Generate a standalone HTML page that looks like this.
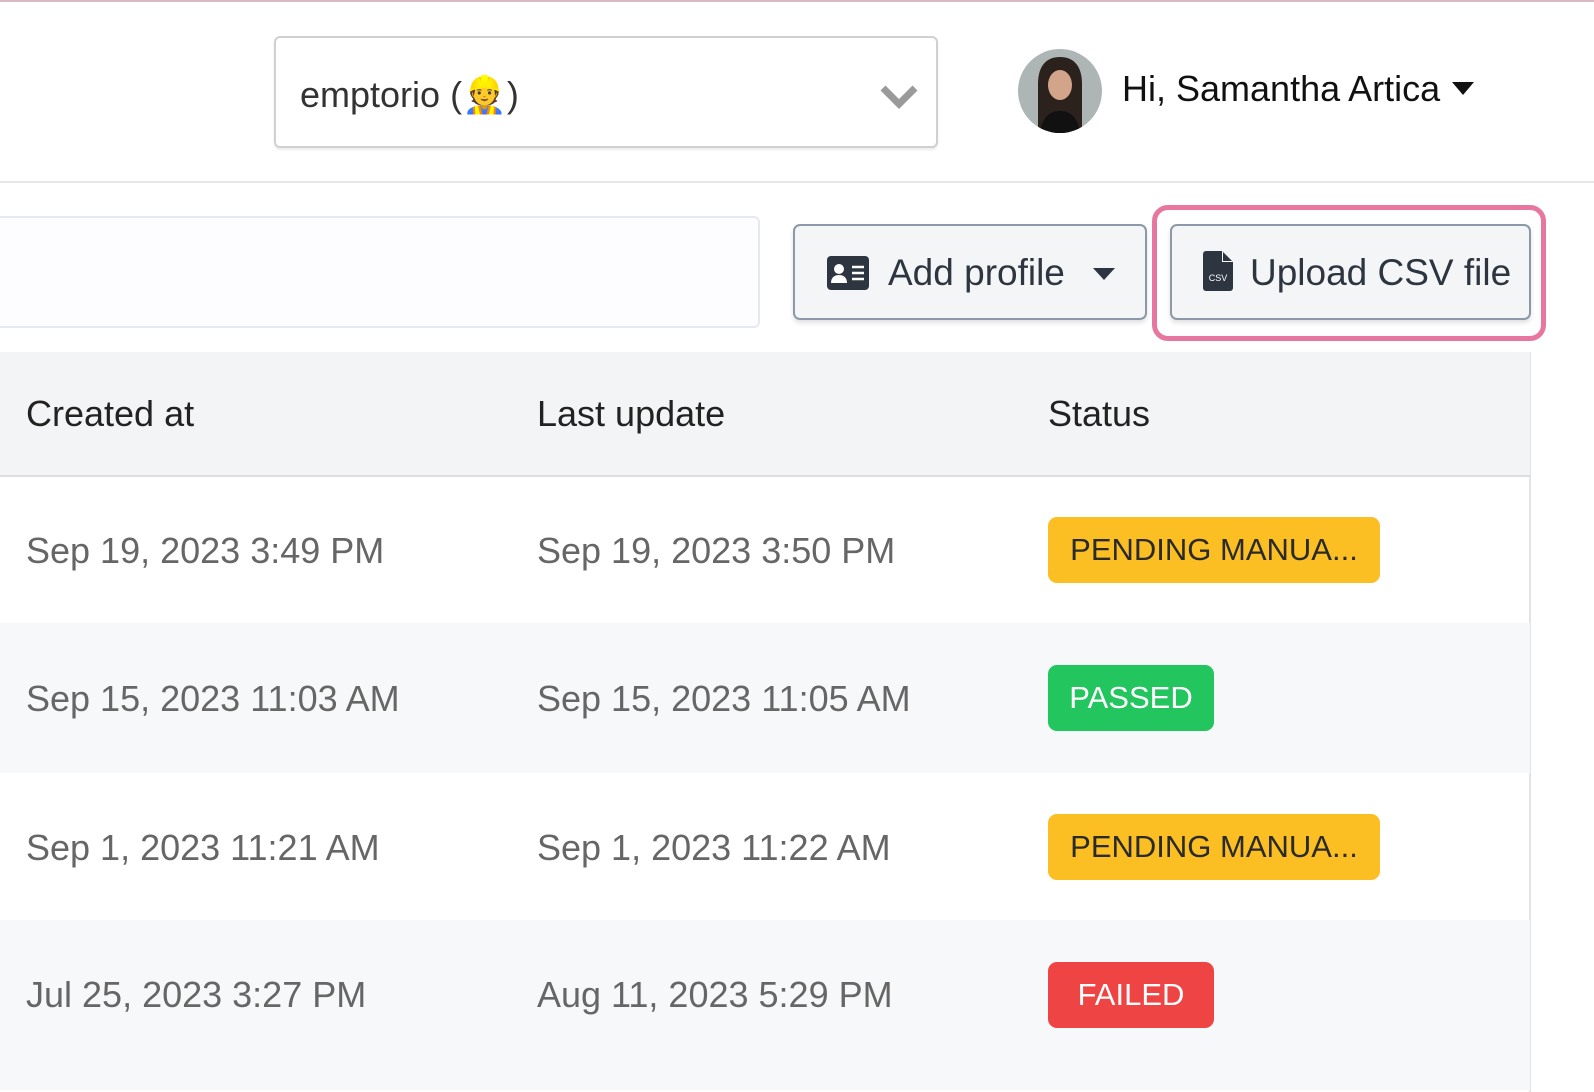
<!DOCTYPE html>
<html><head><meta charset="utf-8"><style>
*{box-sizing:border-box;margin:0;padding:0}
body{width:1594px;height:1090px;overflow:hidden;background:#fff;font-family:"Liberation Sans",sans-serif;position:relative}
.abs{position:absolute}
.topline{left:0;top:0;width:1594px;height:2px;background:#d9b8c4}
.hdr{left:0;top:181px;width:1594px;height:2px;background:#e6e7ea}
.sel{left:274px;top:36px;width:664px;height:112px;border:2px solid #d0d0d0;border-radius:6px;box-shadow:0 2px 2px rgba(0,0,0,.08)}
.sel span{position:absolute;left:24px;top:36px;font-size:36px;color:#333}
.av{left:1018px;top:49px;width:84px;height:84px;border-radius:50%;overflow:hidden;background:#aeb6b5}
.hi{left:1122px;top:68px;font-size:36px;color:#111}
.search{left:-10px;top:216px;width:770px;height:112px;border:2px solid #e7e9f2;border-radius:6px;background:#fdfdff}
.btn{top:224px;height:96px;border:2px solid #8d99a8;border-radius:7px;background:#f4f5f7;box-shadow:0 3px 5px rgba(0,0,0,.12)}
.btn span{position:absolute;top:26px;font-size:37px;color:#2d3540}
.pink{left:1152px;top:205px;width:394px;height:136px;border:5px solid #e8779f;border-radius:16px}
.table{left:-5px;top:352px;width:1536px;height:740px;border-right:2px solid #e3e4e6;border-top:2px solid #e3e4e6}
.th{left:0;top:352px;width:1530px;height:125px;background:#f3f4f6;border-bottom:2px solid #dcdde0}
.t{position:absolute;font-size:36px}
.h{color:#222;top:393px}
.c{color:#666}
.row{left:0;width:1530px}
.b{position:absolute;left:1048px;height:66px;border-radius:9px;font-size:31px;color:#fff;text-align:center;line-height:66px}
</style></head><body>
<div class="abs topline"></div>
<div class="abs sel"><span>emptorio (👷)</span>
<svg class="abs" style="left:603px;top:46px" width="40" height="28" viewBox="0 0 40 28"><path d="M4 4 L20 20 L36 4" stroke="#9a9a9a" stroke-width="7" fill="none"/></svg></div>
<div class="abs av"><svg width="84" height="84" viewBox="0 0 84 84"><path d="M20 84V35C20 15 30 8 42 8s22 7 22 27v49z" fill="#2b211d"/><ellipse cx="42" cy="36" rx="12" ry="15" fill="#d2a48a"/><path d="M22 84c2-16 10-22 20-22s18 6 20 22z" fill="#111"/></svg></div>
<div class="abs hi">Hi, Samantha Artica</div>
<svg class="abs" style="left:1452px;top:82px" width="22" height="14"><path d="M0 0H22L11 13Z" fill="#111"/></svg>
<div class="abs hdr"></div>
<div class="abs search"></div>
<div class="abs btn" style="left:793px;width:354px">
<svg class="abs" style="left:32px;top:30px" width="42" height="34" viewBox="0 0 42 34"><rect width="42" height="34" rx="4" fill="#2d3540"/><circle cx="12" cy="13" r="5" fill="#fff"/><path d="M4 27c0-6 4-8 8-8s8 2 8 8z" fill="#fff"/><path d="M25 11h12M25 17h12M25 23h12" stroke="#fff" stroke-width="2.5"/></svg>
<span style="left:93px">Add profile</span>
<svg class="abs" style="left:298px;top:42px" width="22" height="13"><path d="M0 0H22L11 12Z" fill="#2d3540"/></svg></div>
<div class="abs btn" style="left:1170px;width:361px">
<svg class="abs" style="left:31px;top:25px" width="30" height="40" viewBox="0 0 30 40"><path d="M0 3a3 3 0 0 1 3-3h16l11 11v26a3 3 0 0 1-3 3H3a3 3 0 0 1-3-3z" fill="#2d3540"/><path d="M19 0v11h11" fill="#fff"/><path d="M20 1v9h9z" fill="#2d3540"/><text x="15" y="30" font-size="9" fill="#fff" text-anchor="middle" font-family="Liberation Sans">CSV</text></svg>
<span style="left:78px">Upload CSV file</span></div>
<div class="abs pink"></div>
<div class="abs table"></div>
<div class="abs th"></div>
<div class="t h" style="left:26px">Created at</div>
<div class="t h" style="left:537px">Last update</div>
<div class="t h" style="left:1048px">Status</div>
<div class="abs row" style="top:623px;height:150px;background:#f7f8f9"></div>
<div class="abs row" style="top:920px;height:170px;background:#f7f8f9"></div>
<div class="t c" style="left:26px;top:530px">Sep 19, 2023 3:49 PM</div>
<div class="t c" style="left:537px;top:530px">Sep 19, 2023 3:50 PM</div>
<div class="b" style="top:517px;width:332px;background:#fbbf24;color:#2a2a2a">PENDING MANUA...</div>
<div class="t c" style="left:26px;top:678px">Sep 15, 2023 11:03 AM</div>
<div class="t c" style="left:537px;top:678px">Sep 15, 2023 11:05 AM</div>
<div class="b" style="top:665px;width:166px;background:#22c55e">PASSED</div>
<div class="t c" style="left:26px;top:827px">Sep 1, 2023 11:21 AM</div>
<div class="t c" style="left:537px;top:827px">Sep 1, 2023 11:22 AM</div>
<div class="b" style="top:814px;width:332px;background:#fbbf24;color:#2a2a2a">PENDING MANUA...</div>
<div class="t c" style="left:26px;top:974px">Jul 25, 2023 3:27 PM</div>
<div class="t c" style="left:537px;top:974px">Aug 11, 2023 5:29 PM</div>
<div class="b" style="top:962px;width:166px;background:#ef4444">FAILED</div>
</body></html>
